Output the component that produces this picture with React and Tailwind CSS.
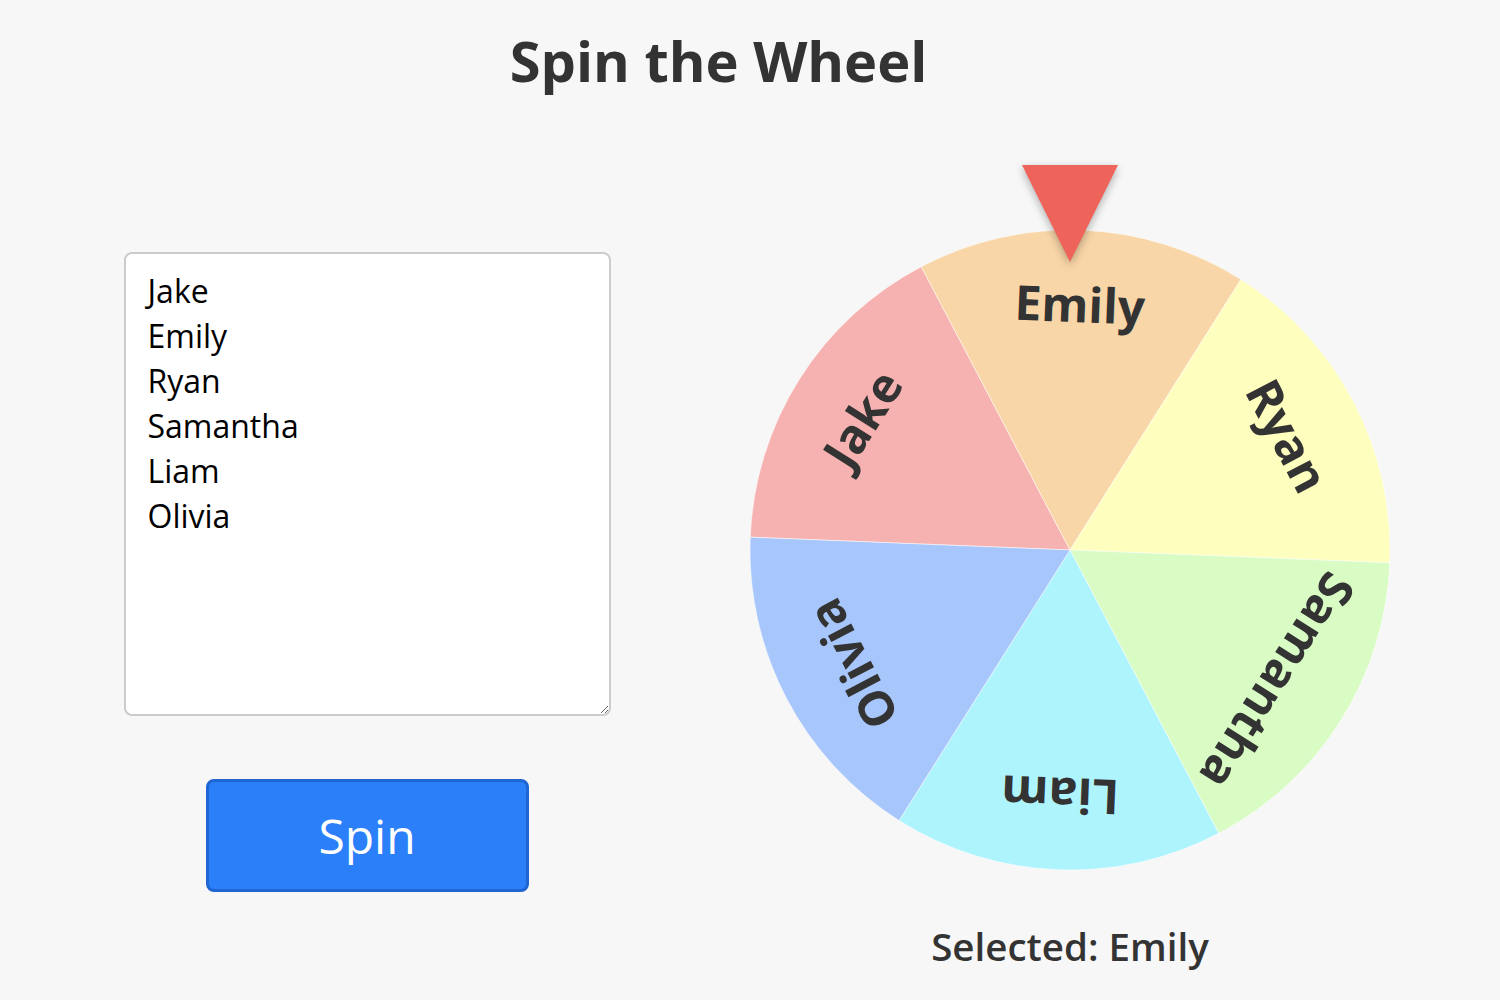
import { useState } from 'react';

const NAMES = ['Jake', 'Emily', 'Ryan', 'Samantha', 'Liam', 'Olivia'];
const COLORS = ['#f6b2b0', '#f9d6a8', '#fefebe', '#d8fcc4', '#aef4fd', '#a7c6fb'];

const SIZE = 640;
const R = 320;
const OFFSET = 182.3; // rotation of the wheel, in degrees

const polar = (deg, r) => {
  const rad = (deg * Math.PI) / 180;
  return [R + r * Math.cos(rad), R + r * Math.sin(rad)];
};

const Wheel = ({ names }) => {
  const arc = 360 / names.length;
  return (
    <svg width={SIZE} height={SIZE} viewBox={`0 0 ${SIZE} ${SIZE}`} className="block">
      {names.map((name, i) => {
        const start = OFFSET + arc * i;
        const end = start + arc;
        const [x1, y1] = polar(start, R);
        const [x2, y2] = polar(end, R);
        return (
          <path
            key={name}
            d={`M${R},${R} L${x1},${y1} A${R},${R} 0 0 1 ${x2},${y2} Z`}
            fill={COLORS[i % COLORS.length]}
            stroke="#ffffff"
            strokeOpacity="0.5"
            strokeWidth="1"
          />
        );
      })}
      {names.map((name, i) => {
        const mid = OFFSET + arc * i + arc / 2;
        return (
          <text
            key={name}
            transform={`translate(${R} ${R}) rotate(${mid + 90})`}
            x="0"
            y="-228"
            textAnchor="middle"
            fill="#333333"
            style={{ fontFamily: '"Open Sans", sans-serif', fontWeight: 700, fontSize: 48 }}
          >
            {name}
          </text>
        );
      })}
    </svg>
  );
};

export default function App() {
  const [text, setText] = useState(NAMES.join('\n'));
  const names = text.split('\n').map((n) => n.trim()).filter(Boolean);

  return (
    <div className="min-h-[1000px] w-full bg-[#f7f7f7] font-['Open_Sans',sans-serif] text-[#333]">
      <div className="ml-[47px] w-[1343px]">
        <h1 className="pt-[22px] text-center text-[56px] font-bold leading-[76px]">Spin the Wheel</h1>

        <div className="grid grid-cols-2 gap-[63px]">
          {/* left: names + button */}
          <div className="flex flex-col items-center pt-[154px]">
            <textarea
              value={text}
              onChange={(e) => setText(e.target.value)}
              className="h-[464px] w-[487px] rounded-lg border-2 border-[#cccccc] bg-white px-[22px] py-[14px] text-[32px] leading-[45px] text-black outline-none"
            />
            <button className="mt-[63px] h-[113px] w-[323px] rounded-lg border-[3px] border-[#1f66d3] bg-[#2b7ff9] text-[48px] text-white">
              Spin
            </button>
          </div>

          {/* right: wheel */}
          <div className="flex flex-col items-center pt-[132px]">
            <div className="relative">
              <Wheel names={names} />
              <svg
                width="96"
                height="97"
                viewBox="0 0 96 97"
                className="absolute left-1/2 top-[-65px] -translate-x-1/2 drop-shadow-[0_3px_4px_rgba(0,0,0,0.3)]"
              >
                <polygon points="0,0 96,0 48,97" fill="#ef645a" />
              </svg>
            </div>
            <p className="mt-[50px] text-[38.5px] font-semibold leading-[52px]">Selected: Emily</p>
          </div>
        </div>
      </div>
    </div>
  );
}
